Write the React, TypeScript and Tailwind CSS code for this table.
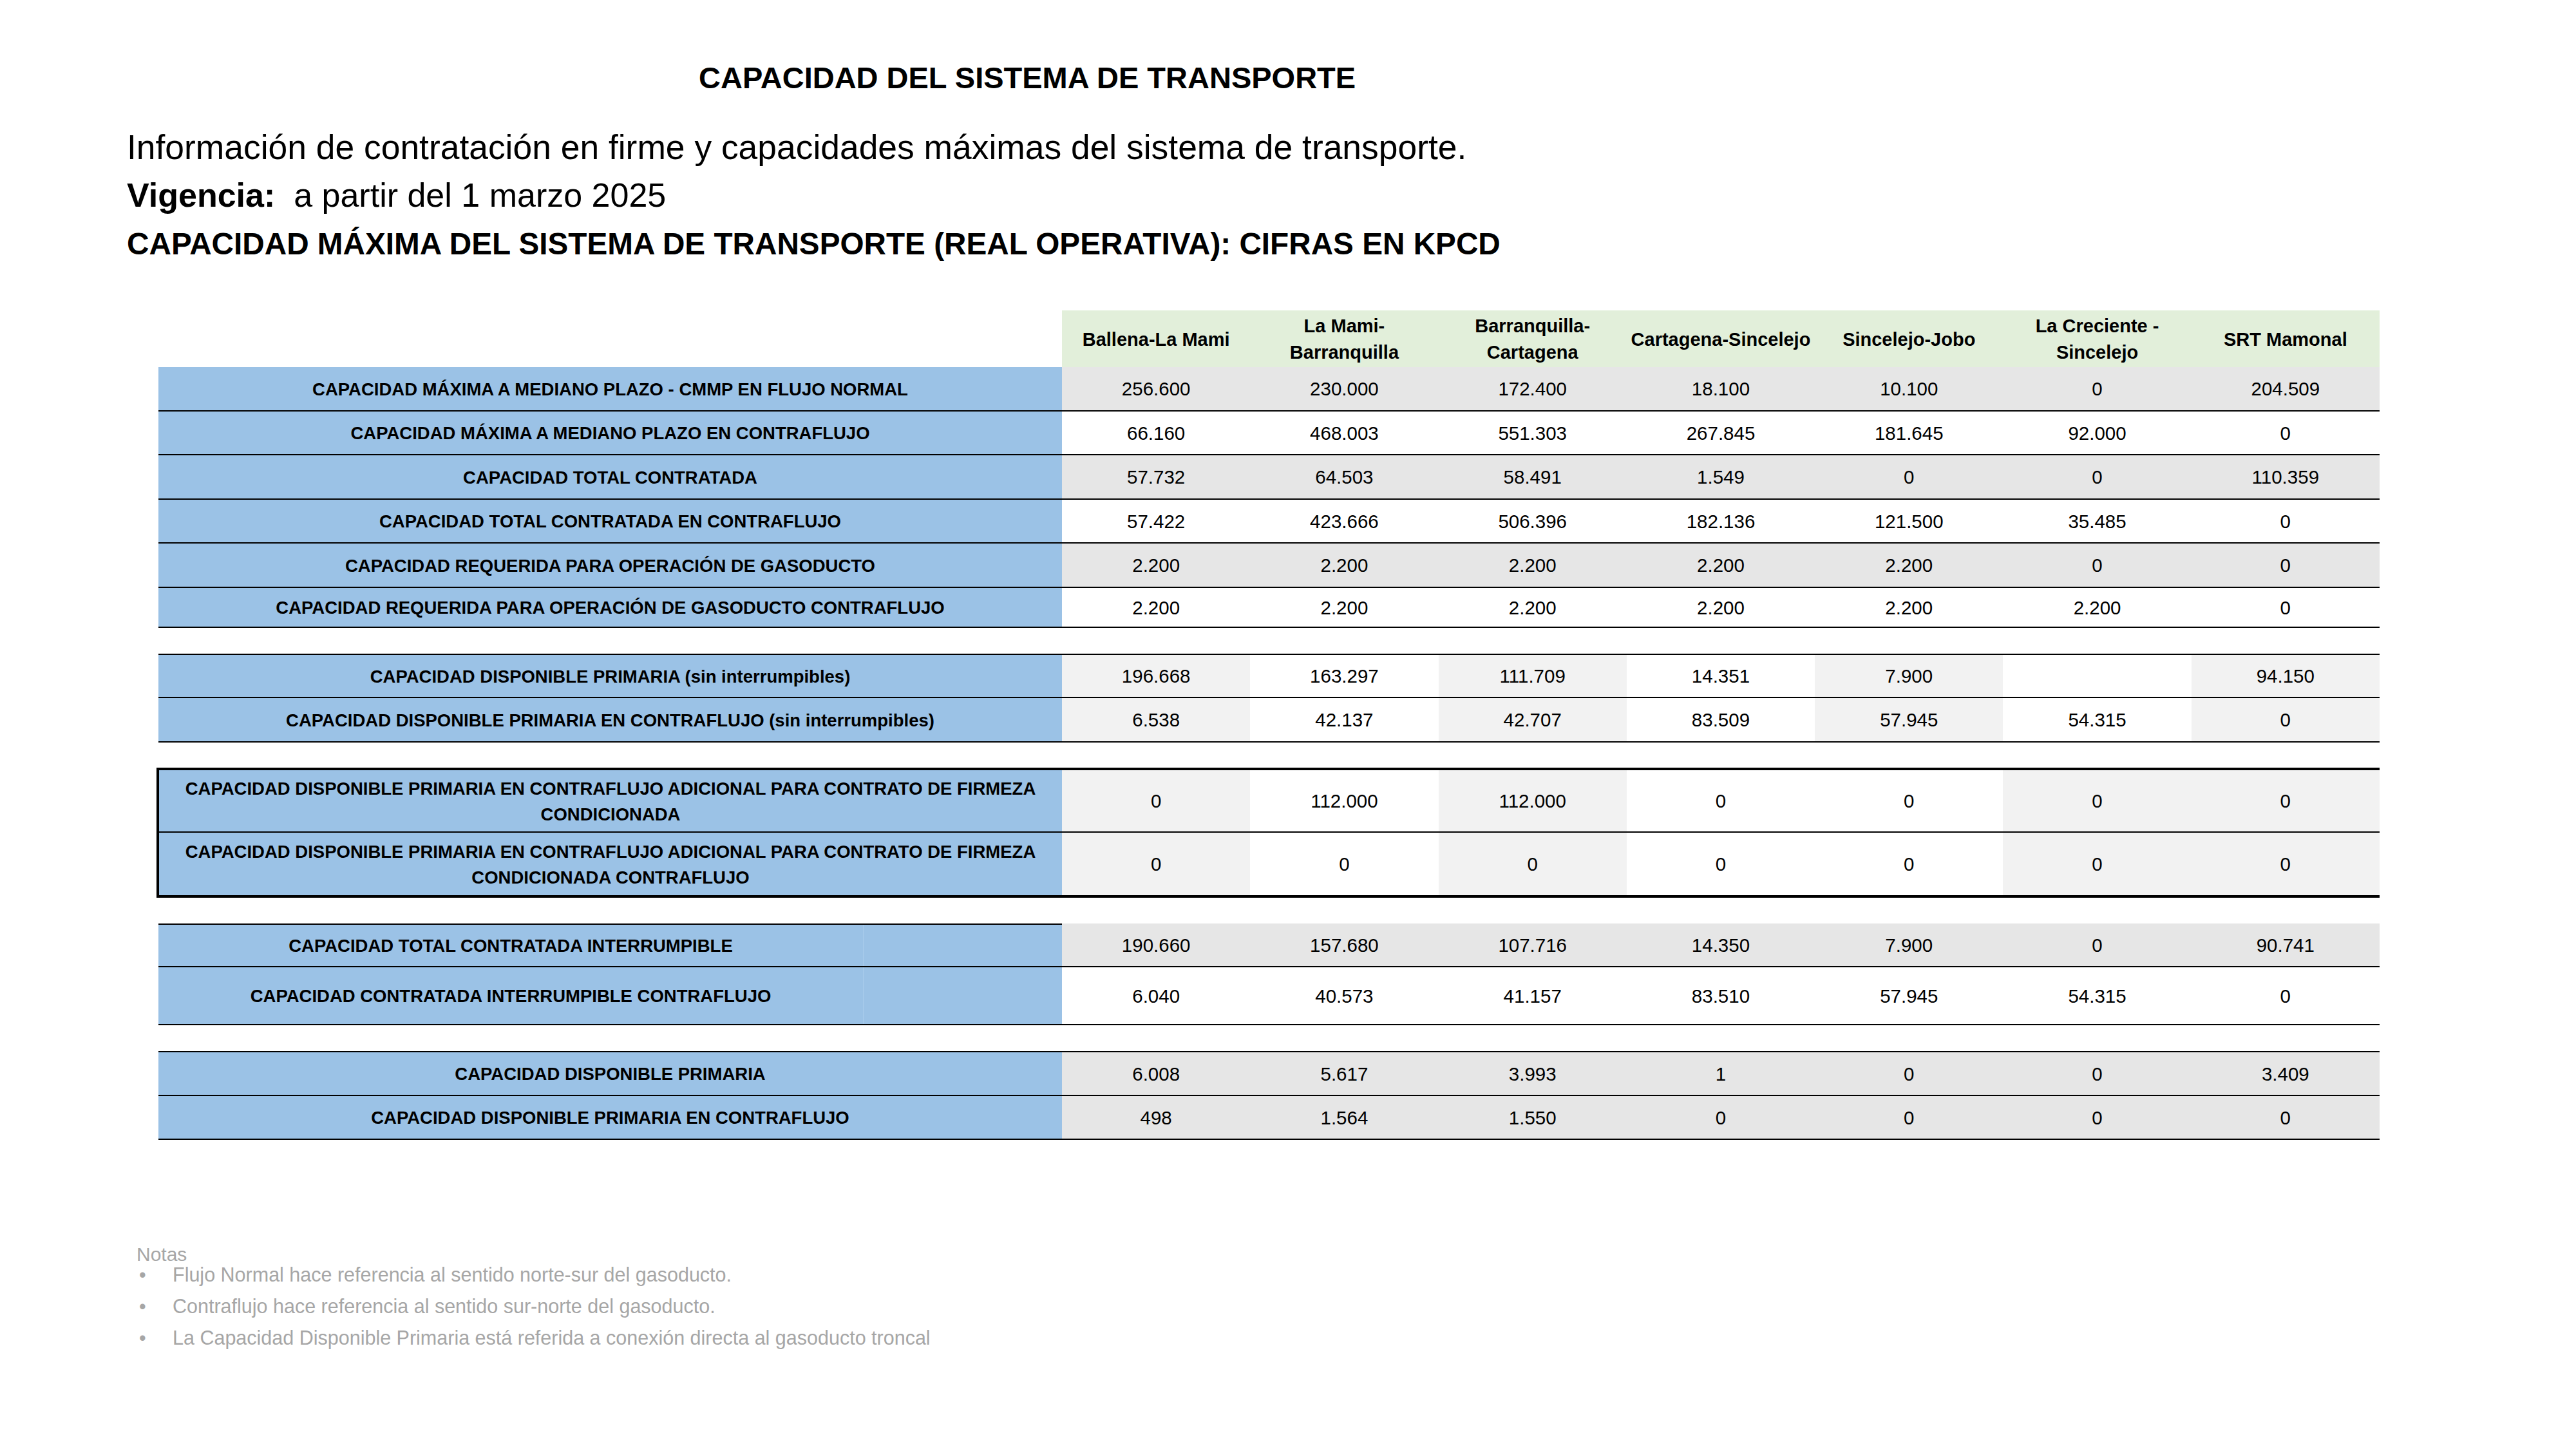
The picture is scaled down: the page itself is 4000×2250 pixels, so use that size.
import React from "react";

const G = "bg-[#e6e6e6]";
const L = "bg-[#f2f2f2]";
const W = "bg-white";

type RowDef = {
  label: string;
  values: string[];
  h: string;
  bgs: string[];
};

const all = (c: string) => [c, c, c, c, c, c, c];
const stripes = [L, W, L, W, L, W, L];
const condStripes = [L, W, L, W, W, L, L];

const headers: React.ReactNode[] = [
  "Ballena-La Mami",
  <>La Mami-<br />Barranquilla</>,
  <>Barranquilla-<br />Cartagena</>,
  "Cartagena-Sincelejo",
  "Sincelejo-Jobo",
  <>La Creciente -<br />Sincelejo</>,
  "SRT Mamonal",
];

const sectionA: RowDef[] = [
  {
    label: "CAPACIDAD MÁXIMA A MEDIANO PLAZO - CMMP EN FLUJO NORMAL",
    values: ["256.600", "230.000", "172.400", "18.100", "10.100", "0", "204.509"],
    h: "h-[69px]",
    bgs: all(G),
  },
  {
    label: "CAPACIDAD MÁXIMA A MEDIANO PLAZO EN CONTRAFLUJO",
    values: ["66.160", "468.003", "551.303", "267.845", "181.645", "92.000", "0"],
    h: "h-[68px]",
    bgs: all(W),
  },
  {
    label: "CAPACIDAD TOTAL CONTRATADA",
    values: ["57.732", "64.503", "58.491", "1.549", "0", "0", "110.359"],
    h: "h-[69px]",
    bgs: all(G),
  },
  {
    label: "CAPACIDAD TOTAL CONTRATADA EN CONTRAFLUJO",
    values: ["57.422", "423.666", "506.396", "182.136", "121.500", "35.485", "0"],
    h: "h-[68px]",
    bgs: all(W),
  },
  {
    label: "CAPACIDAD REQUERIDA PARA OPERACIÓN DE GASODUCTO",
    values: ["2.200", "2.200", "2.200", "2.200", "2.200", "0", "0"],
    h: "h-[69px]",
    bgs: all(G),
  },
  {
    label: "CAPACIDAD REQUERIDA PARA OPERACIÓN DE GASODUCTO CONTRAFLUJO",
    values: ["2.200", "2.200", "2.200", "2.200", "2.200", "2.200", "0"],
    h: "h-[62px]",
    bgs: all(W),
  },
];

const sectionB: RowDef[] = [
  {
    label: "CAPACIDAD DISPONIBLE PRIMARIA (sin interrumpibles)",
    values: ["196.668", "163.297", "111.709", "14.351", "7.900", "", "94.150"],
    h: "h-[67px]",
    bgs: stripes,
  },
  {
    label: "CAPACIDAD DISPONIBLE PRIMARIA EN CONTRAFLUJO (sin interrumpibles)",
    values: ["6.538", "42.137", "42.707", "83.509", "57.945", "54.315", "0"],
    h: "h-[69px]",
    bgs: stripes,
  },
];

const sectionC: RowDef[] = [
  {
    label:
      "CAPACIDAD DISPONIBLE PRIMARIA EN CONTRAFLUJO ADICIONAL PARA CONTRATO DE FIRMEZA CONDICIONADA",
    values: ["0", "112.000", "112.000", "0", "0", "0", "0"],
    h: "h-[97px]",
    bgs: condStripes,
  },
  {
    label:
      "CAPACIDAD DISPONIBLE PRIMARIA EN CONTRAFLUJO ADICIONAL PARA CONTRATO DE FIRMEZA CONDICIONADA CONTRAFLUJO",
    values: ["0", "0", "0", "0", "0", "0", "0"],
    h: "h-[97px]",
    bgs: condStripes,
  },
];

const sectionE: RowDef[] = [
  {
    label: "CAPACIDAD DISPONIBLE PRIMARIA",
    values: ["6.008", "5.617", "3.993", "1", "0", "0", "3.409"],
    h: "h-[68px]",
    bgs: all(G),
  },
  {
    label: "CAPACIDAD DISPONIBLE PRIMARIA EN CONTRAFLUJO",
    values: ["498", "1.564", "1.550", "0", "0", "0", "0"],
    h: "h-[68px]",
    bgs: all(G),
  },
];

function DataCells({ values, bgs }: { values: string[]; bgs: string[] }) {
  return (
    <div className="flex w-[2046px] h-full">
      {values.map((v, i) => (
        <div
          key={i}
          className={`flex-1 h-full flex items-center justify-center pt-[2px] text-[29.5px] ${bgs[i]}`}
        >
          {v}
        </div>
      ))}
    </div>
  );
}

function Row({ r, labelW = "w-[1403px]" }: { r: RowDef; labelW?: string }) {
  return (
    <div className={`flex box-border border-b-2 border-black ${r.h}`}>
      <div
        className={`${labelW} h-full bg-[#9bc2e6] flex items-center justify-center text-center px-[20px] pt-[2px] font-bold text-[27.5px] leading-[40px]`}
      >
        {r.label}
      </div>
      <DataCells values={r.values} bgs={r.bgs} />
    </div>
  );
}

export default function App() {
  return (
    <div className="w-[4000px] h-[2250px] bg-white text-black font-['Liberation_Sans',Arial,sans-serif] overflow-hidden">
      <div className="pt-[91px]">
        <div className="pl-[1085px] h-[60px] leading-[60px] text-[47px] font-bold whitespace-nowrap">
          CAPACIDAD DEL SISTEMA DE TRANSPORTE
        </div>
        <div className="mt-[40px] pl-[197px] leading-[75px] whitespace-nowrap">
          <div className="text-[53.4px]">
            Información de contratación en firme y capacidades máximas del sistema de transporte.
          </div>
          <div className="text-[52px]">
            <span className="font-bold">Vigencia:</span>
            {"\u00a0 "}a partir del 1 marzo 2025
          </div>
          <div className="text-[47.7px] font-bold">
            CAPACIDAD MÁXIMA DEL SISTEMA DE TRANSPORTE (REAL OPERATIVA): CIFRAS EN KPCD
          </div>
        </div>
      </div>

      {/* Table */}
      <div className="mt-[66px] ml-[246px] w-[3449px]">
        {/* Header */}
        <div className="flex h-[88px]">
          <div className="w-[1403px] h-full" />
          <div className="flex w-[2046px] h-full">
            {headers.map((h, i) => (
              <div
                key={i}
                className="flex-1 h-full bg-[#e2efda] flex items-center justify-center text-center pt-[2px] font-bold text-[29px] leading-[41px] whitespace-nowrap"
              >
                <span>{h}</span>
              </div>
            ))}
          </div>
        </div>

        {/* Section A */}
        <div>
          {sectionA.map((r, i) => (
            <Row key={i} r={r} />
          ))}
        </div>

        {/* Section B */}
        <div className="mt-[40px] border-t-2 border-black">
          {sectionB.map((r, i) => (
            <Row key={i} r={r} />
          ))}
        </div>

        {/* Section C */}
        <div className="mt-[39px] -ml-[3px] w-[3452px] border-t-4 border-b-4 border-l-4 border-black">
          {sectionC.map((r, i) => (
            <div
              key={i}
              className={`flex box-border ${i === 0 ? "border-b-2 border-black" : ""} ${r.h}`}
            >
              <div className="w-[1402px] h-full bg-[#9bc2e6] flex items-center justify-center text-center px-[20px] pt-[2px] font-bold text-[27.5px] leading-[40px]">
                {r.label}
              </div>
              <DataCells values={r.values} bgs={r.bgs} />
            </div>
          ))}
        </div>

        {/* Section D */}
        <div className="mt-[40px]">
          <div className="flex box-border border-b-2 border-black h-[68px]">
            <div className="w-[1403px] h-full flex border-t-2 border-black bg-[#9bc2e6]">
              <div className="w-[1095px] h-full flex items-center justify-center pt-[2px] font-bold text-[27.5px] border-r border-[#aacdec]">
                CAPACIDAD TOTAL CONTRATADA INTERRUMPIBLE
              </div>
              <div className="flex-1 h-full" />
            </div>
            <DataCells
              values={["190.660", "157.680", "107.716", "14.350", "7.900", "0", "90.741"]}
              bgs={all(G)}
            />
          </div>
          <div className="flex box-border border-b-2 border-black h-[90px]">
            <div className="w-[1403px] h-full flex bg-[#9bc2e6]">
              <div className="w-[1095px] h-full flex items-center justify-center pt-[2px] font-bold text-[27.5px] border-r border-[#aacdec]">
                CAPACIDAD CONTRATADA INTERRUMPIBLE CONTRAFLUJO
              </div>
              <div className="flex-1 h-full" />
            </div>
            <DataCells
              values={["6.040", "40.573", "41.157", "83.510", "57.945", "54.315", "0"]}
              bgs={all(W)}
            />
          </div>
        </div>

        {/* Section E */}
        <div className="mt-[40px] border-t-2 border-black">
          {sectionE.map((r, i) => (
            <Row key={i} r={r} />
          ))}
        </div>
      </div>

      {/* Notes */}
      <div className="mt-[164px] pl-[212px] text-[#a6a6a6] text-[30px]">
        <div className="leading-[28px]">Notas</div>
        <div className="flex flex-col gap-[15px] text-[30.5px]">
          {[
            "Flujo Normal hace referencia al sentido norte-sur del gasoducto.",
            "Contraflujo hace referencia al sentido sur-norte del gasoducto.",
            "La Capacidad Disponible Primaria está referida a conexión directa al gasoducto troncal",
          ].map((t, i) => (
            <div key={i} className="flex leading-[34px] whitespace-nowrap">
              <span className="w-[56px] pl-[4px]">•</span>
              <span>{t}</span>
            </div>
          ))}
        </div>
      </div>
    </div>
  );
}
